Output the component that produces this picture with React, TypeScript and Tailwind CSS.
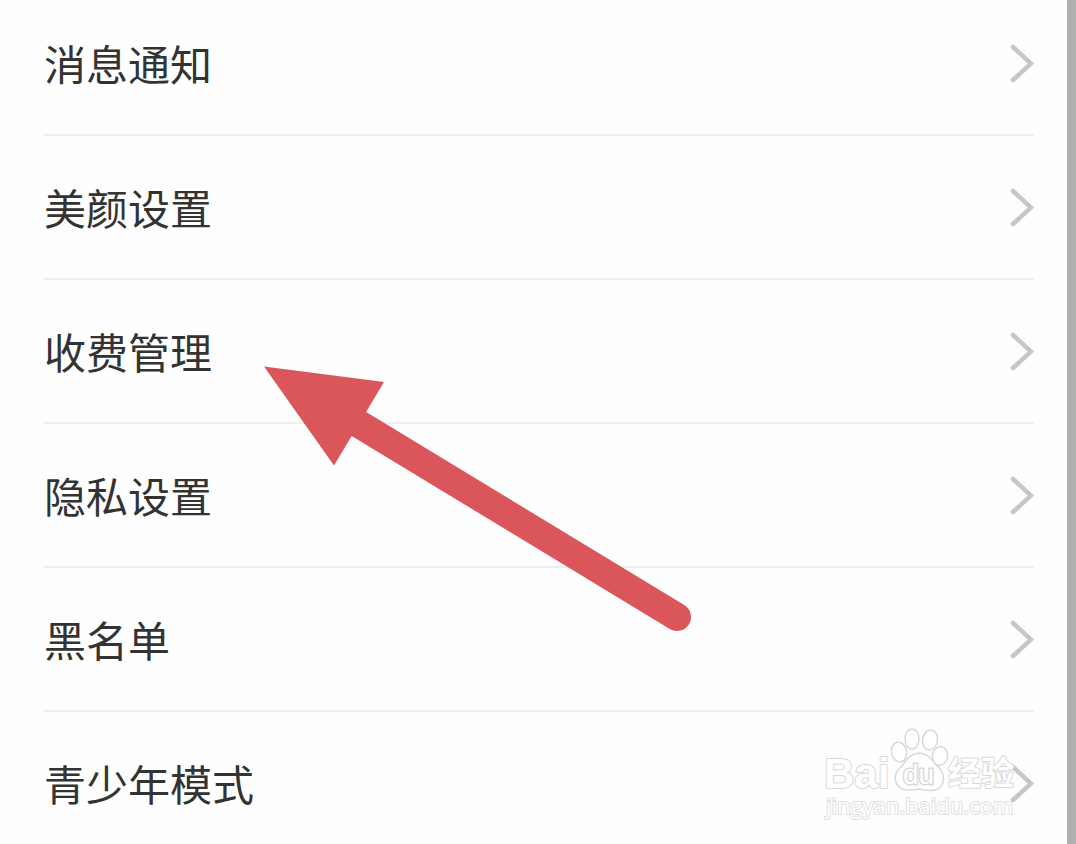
import React from 'react';

const items = ['消息通知', '美颜设置', '收费管理', '隐私设置', '黑名单', '青少年模式'];

interface SettingRowProps {
  label: string;
}

const SettingRow: React.FC<SettingRowProps> = ({ label }) => (
  <li className="border-b-2 border-[#eeeeee]">
    <button className="flex h-[142px] w-full items-center justify-between text-left">
      <span className="text-[42px] leading-[60px] text-[#333333]">{label}</span>
      <svg className="h-10 w-6 shrink-0" viewBox="0 0 24 40" fill="none" aria-hidden="true">
        <path
          d="M3 4 L21 20.500 L3 37"
          stroke="#c6c6c6"
          strokeWidth="4.500"
          strokeLinecap="round"
          strokeLinejoin="miter"
        />
      </svg>
    </button>
  </li>
);

const PointerArrow: React.FC = () => (
  <svg
    className="pointer-events-none absolute left-[264px] top-[366px]"
    width="430"
    height="268"
    viewBox="0 0 430 268"
    aria-hidden="true"
  >
    <polygon points="0,0.500 120,16 70,99.500" fill="#db565b" />
    <line x1="90" y1="55" x2="413" y2="251" stroke="#db565b" strokeWidth="28" strokeLinecap="round" />
  </svg>
);

const Watermark: React.FC = () => (
  <svg
    className="pointer-events-none absolute bottom-5 right-[52px]"
    width="204"
    height="100"
    viewBox="0 0 204 100"
    fill="#ffffff"
    stroke="#d9d9d9"
    strokeWidth="1.500"
    aria-label="Baidu 经验"
  >
    <g strokeWidth="2" strokeLinejoin="round" style={{ paintOrder: 'stroke' }}>
      <text x="4" y="64" fontSize="42" fontWeight="700" fontFamily="'Liberation Sans', Arial, sans-serif">
        Bai
      </text>
      <text x="128" y="61" fontSize="33" fontWeight="700" fontFamily="'Noto Sans CJK SC', sans-serif">
        经验
      </text>
      <text x="6" y="90" fontSize="22" fontFamily="'Open Sans', sans-serif" stroke="#dedede">
        jingyan.baidu.com
      </text>
    </g>
    <ellipse cx="79" cy="28" rx="7.500" ry="10" transform="rotate(-10 79 28)" />
    <ellipse cx="92" cy="15" rx="7" ry="10" />
    <ellipse cx="110" cy="16" rx="7.500" ry="10" transform="rotate(10 110 16)" />
    <ellipse cx="120" cy="32" rx="7.500" ry="9.500" transform="rotate(10 120 32)" />
    <path d="M99 29 C90 30 87 35 82 42 C76 47 74 52 76 58 C79 67 88 67 99 65 C112 68 121 67 123 58 C125 50 121 45 116 41 C111 34 108 30 99 29 Z" />
    <text
      x="83"
      y="60"
      fontSize="28"
      fontFamily="'Liberation Sans', Arial, sans-serif"
      strokeWidth="3"
      style={{ paintOrder: 'stroke' }}
    >
      du
    </text>
  </svg>
);

const App: React.FC = () => {
  return (
    <div
      lang="zh-CN"
      className="relative flex h-screen overflow-hidden bg-[#fefefe] font-['Noto_Sans_CJK_SC',sans-serif]"
    >
      <main className="min-w-0 flex-1 pl-11 pr-[33px]">
        <ul className="-mt-2">
          {items.map((label) => (
            <SettingRow key={label} label={label} />
          ))}
        </ul>
      </main>
      <div className="w-[9px] shrink-0 bg-[#b0b0b0]" />
      <PointerArrow />
      <Watermark />
    </div>
  );
};

export default App;
